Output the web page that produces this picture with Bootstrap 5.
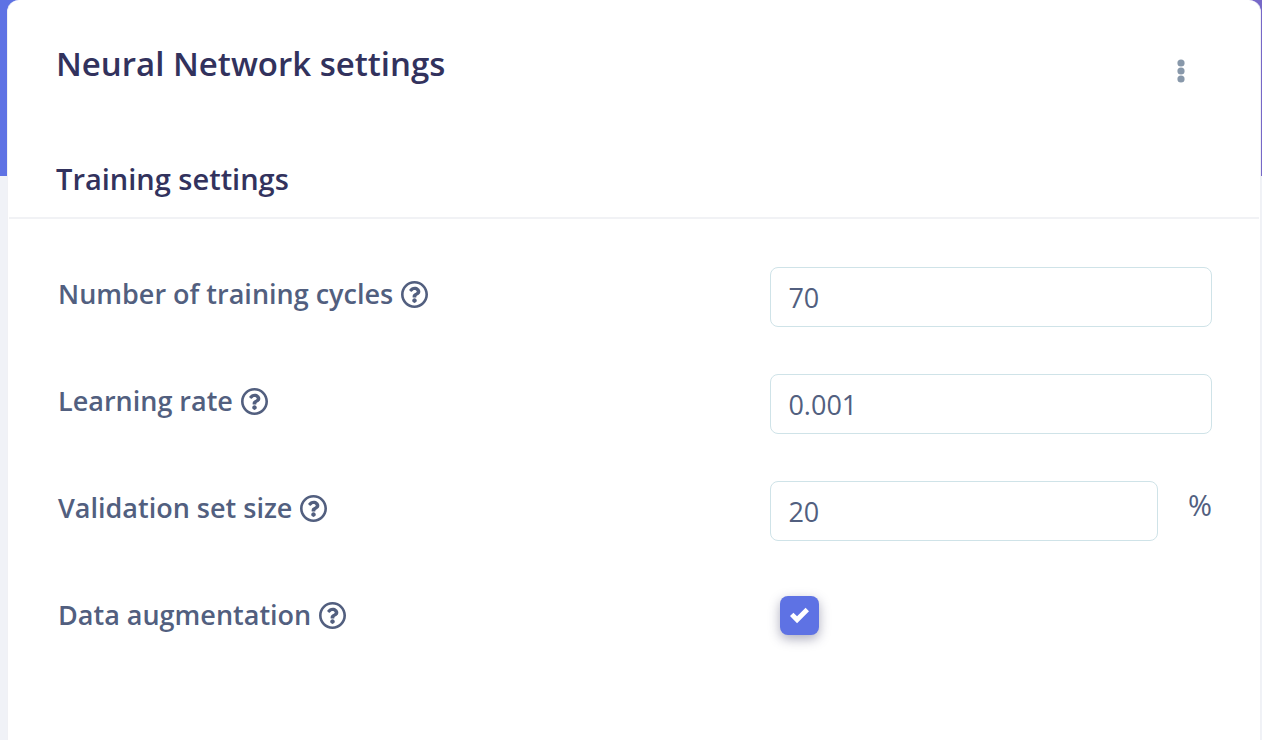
<!DOCTYPE html>
<html lang="en">
<head>
<meta charset="utf-8">
<meta name="viewport" content="width=device-width, initial-scale=1">
<title>Neural Network settings</title>
<link href="https://cdn.jsdelivr.net/npm/bootstrap@5.3.0/dist/css/bootstrap.min.css" rel="stylesheet">
<style>
  body {
    font-family: "Open Sans", sans-serif;
    font-size: 27px;
    line-height: 40px;
    color: #525f7f;
    background: linear-gradient(90deg, #5e72e4, #7668c8) 0 0 / 100% 176px no-repeat #f0f2f7;
  }
  .settings-card {
    --bs-card-border-width: 1px;
    --bs-card-border-color: #f0f1f5;
    --bs-card-border-radius: 12px;
    --bs-card-inner-border-radius: 11px;
    --bs-card-color: #525f7f;
    margin: 0 1px 0 7px;
    border-top: 0;
    border-bottom: 0;
    border-bottom-left-radius: 0;
    border-bottom-right-radius: 0;
  }
  .card-top { padding: 40px 48px 0; }
  .card-top h1, .section-head h2 { color: #32325d; font-weight: 600; line-height: 48px; }
  .card-top h1 { font-size: 33px; }
  .section-head { padding: 64px 47px 14px; border-bottom: 2px solid #f1f2f5; margin: 0 1px; }
  .section-head h2 { font-size: 29px; }
  .menu-btn { width: 32px; height: 40px; margin: 11px 15px 0 0; color: #8898aa; }
  .menu-btn svg { width: 8px; height: 24px; }
  .settings-form { padding: 48px 48px 48px 49px; display: grid; row-gap: 47px; }
  .settings-form .row { --bs-gutter-x: 68px; min-height: 60px; }
  .settings-form label { padding: 7px 0 0 1px; font-weight: 600; }
  .help-icon { width: 27px; height: 27px; margin-left: 8px; }
  .settings-form .form-control {
    height: 60px;
    padding: 0 17px;
    font-size: 27px;
    color: #525f7f;
    border: 1px solid #cfe3e8;
    border-radius: 8px;
  }
  .unit { margin-left: 30px; padding-top: 4px; font-size: 29px; }
  .settings-form .form-check-input {
    width: 39px;
    height: 39px;
    margin: 8px 10px 0;
    border: 0;
    border-radius: 8px;
    box-shadow: 0 4px 12px rgba(50, 50, 93, .4);
  }
  .settings-form .form-check-input:checked {
    background-color: #5e72e4;
    background-size: 19px 19px;
    background-image: url("data:image/svg+xml,%3Csvg xmlns='http://www.w3.org/2000/svg' viewBox='0 0 8 8'%3E%3Cpath fill='%23fff' d='M6.564.75l-3.59 3.612-1.538-1.55L0 4.26 2.974 7.25 8 2.193z'/%3E%3C/svg%3E");
  }
</style>
</head>
<body>
<svg class="d-none" aria-hidden="true">
  <symbol id="help" viewBox="8 8 496 496">
    <path fill="currentColor" d="M256 8C119.043 8 8 119.083 8 256c0 136.997 111.043 248 248 248s248-111.003 248-248C504 119.083 392.957 8 256 8zm0 448c-110.532 0-200-89.431-200-200 0-110.495 89.472-200 200-200 110.491 0 200 89.471 200 200 0 110.53-89.431 200-200 200zm107.244-255.2c0 67.052-72.421 68.084-72.421 92.863V300c0 6.627-5.373 12-12 12h-45.647c-6.627 0-12-5.373-12-12v-8.659c0-35.745 27.1-50.034 47.579-61.516 17.561-9.845 28.324-16.541 28.324-29.579 0-17.246-21.999-28.693-39.784-28.693-23.189 0-33.894 10.977-48.942 29.969-4.057 5.12-11.46 6.071-16.666 2.124l-27.824-21.098c-5.107-3.872-6.251-11.066-2.644-16.363C184.846 131.491 214.94 112 261.794 112c49.071 0 101.45 38.304 101.45 88.8zM298 368c0 23.159-18.841 42-42 42s-42-18.841-42-42 18.841-42 42-42 42 18.841 42 42z"/>
  </symbol>
</svg>
<main class="card settings-card min-vh-100">
  <header class="card-top d-flex justify-content-between align-items-start">
    <h1 class="mb-0">Neural Network settings</h1>
    <button type="button" class="menu-btn btn p-0 border-0 d-flex align-items-center justify-content-center" aria-label="More options">
      <svg viewBox="0 0 8 24" fill="currentColor" aria-hidden="true"><circle cx="4" cy="4" r="3.6"/><circle cx="4" cy="12" r="3.6"/><circle cx="4" cy="20" r="3.6"/></svg>
    </button>
  </header>
  <div class="section-head"><h2 class="mb-0">Training settings</h2></div>
  <form class="settings-form">
    <div class="row">
      <div class="col-7 d-flex align-items-start"><label class="d-flex align-items-center" for="cycles">Number of training cycles<svg class="help-icon" aria-hidden="true"><use href="#help"/></svg></label></div>
      <div class="col-5"><input type="text" class="form-control" id="cycles" value="70"></div>
    </div>
    <div class="row">
      <div class="col-7 d-flex align-items-start"><label class="d-flex align-items-center" for="rate">Learning rate<svg class="help-icon" aria-hidden="true"><use href="#help"/></svg></label></div>
      <div class="col-5"><input type="text" class="form-control" id="rate" value="0.001"></div>
    </div>
    <div class="row">
      <div class="col-7 d-flex align-items-start"><label class="d-flex align-items-center" for="validation">Validation set size<svg class="help-icon" aria-hidden="true"><use href="#help"/></svg></label></div>
      <div class="col-5 d-flex"><input type="text" class="form-control" id="validation" value="20"><span class="unit">%</span></div>
    </div>
    <div class="row">
      <div class="col-7 d-flex align-items-start"><label class="d-flex align-items-center" for="augment">Data augmentation<svg class="help-icon" aria-hidden="true"><use href="#help"/></svg></label></div>
      <div class="col-5 d-flex"><input type="checkbox" class="form-check-input" id="augment" checked></div>
    </div>
  </form>
</main>
<script src="https://cdn.jsdelivr.net/npm/bootstrap@5.3.0/dist/js/bootstrap.bundle.min.js"></script>
</body>
</html>
